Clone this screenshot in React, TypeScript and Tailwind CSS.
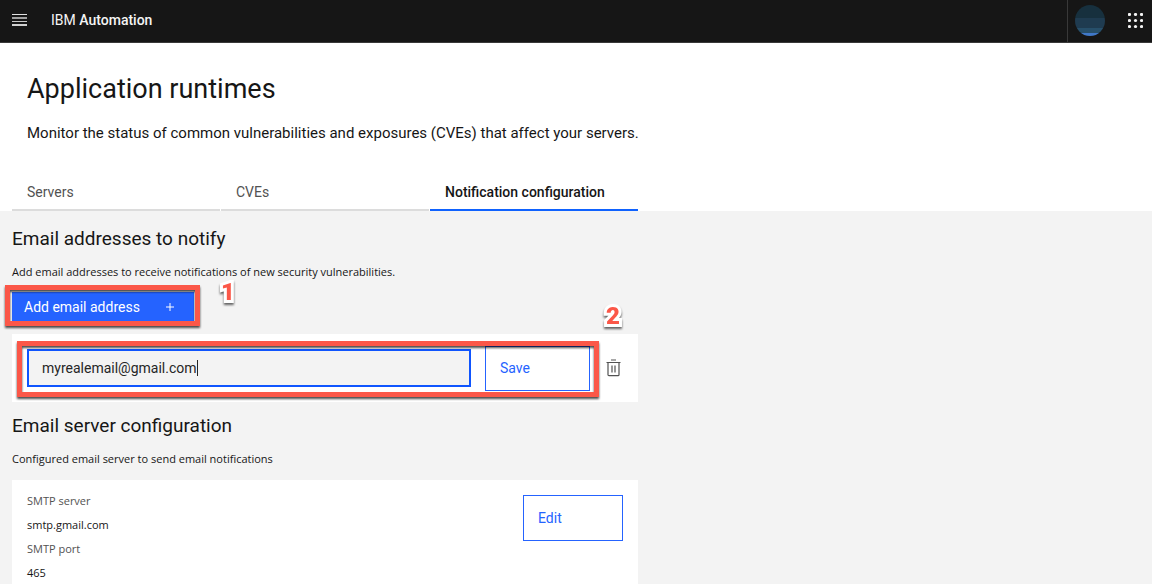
import React, { useState } from "react";

const tabs = ["Servers", "CVEs", "Notification configuration"];

const settings = [
  { label: "SMTP server", value: "smtp.gmail.com" },
  { label: "SMTP port", value: "465" },
];

function MenuIcon() {
  return (
    <svg width="16" height="14" viewBox="0 0 16 14" aria-hidden="true">
      <rect y="1" width="15" height="1" fill="#e0e0e0" />
      <rect y="4" width="15" height="2" fill="#a0a0a0" />
      <rect y="8" width="15" height="1" fill="#c8c8c8" />
      <rect y="11" width="15" height="2" fill="#d0d0d0" />
    </svg>
  );
}

function Avatar() {
  return (
    <svg width="30" height="31" viewBox="0 0 30 31" aria-hidden="true">
      <clipPath id="avatar">
        <ellipse cx="15" cy="15.5" rx="15" ry="15.5" />
      </clipPath>
      <g clipPath="url(#avatar)">
        <rect width="30" height="13" fill="#17303e" />
        <rect y="13" width="30" height="10" fill="#1f3b50" />
        <rect y="23" width="30" height="5" fill="#274f6a" />
        <rect y="28" width="30" height="3" fill="#4078c8" />
      </g>
    </svg>
  );
}

function AppsIcon() {
  return (
    <svg width="15" height="15" viewBox="0 0 15 15" fill="#f4f4f4" aria-hidden="true">
      {[0, 6, 12].map((y) =>
        [0, 6, 12].map((x) => <circle key={`${x}-${y}`} cx={x + 1.5} cy={y + 1.5} r="1.6" />)
      )}
    </svg>
  );
}

function TrashIcon() {
  return (
    <svg width="15" height="18" viewBox="0 0 15 18" fill="none" stroke="#525252" strokeWidth="1.2" aria-hidden="true">
      <path d="M5 1h5M0.5 3.5h14M2 3.5v12.2a1 1 0 0 0 1 1h9a1 1 0 0 0 1-1V3.5M6 6.5v7M9 6.5v7" />
    </svg>
  );
}

function Step({ n, className }: { n: number; className: string }) {
  return (
    <span
      className={`absolute text-2xl leading-6 font-black text-[#fb5748] [-webkit-text-stroke:6px_white] [paint-order:stroke_fill] drop-shadow-[0_2px_1px_rgba(0,0,0,0.6)] ${className}`}
    >
      {n}
    </span>
  );
}

const frame =
  "pointer-events-none absolute border-[5px] border-[#fb5748] drop-shadow-[0_2px_1px_rgba(0,0,0,0.7)]";

const small = "font-['Open_Sans',sans-serif] text-[11px]";

export default function App() {
  const [email, setEmail] = useState("myrealemail@gmail.com");
  const [active, setActive] = useState(2);

  return (
    <div className="flex h-screen flex-col overflow-hidden bg-[#f3f3f3] font-[Roboto,sans-serif] text-[#161616]">
      <header className="flex h-[43px] shrink-0 items-center border-b border-[#393939] bg-[#161616] pb-0.5 pl-3 text-[#f4f4f4]">
        <button aria-label="Open menu">
          <MenuIcon />
        </button>
        <a href="#" className="ml-[23px] text-sm font-medium">
          <span className="font-normal">IBM</span> Automation
        </a>
        <div className="-mb-0.5 ml-auto flex h-[42px] items-center border-l border-[#393939] pr-[9px] pb-0.5 pl-[7px]">
          <button aria-label="User profile">
            <Avatar />
          </button>
          <button aria-label="App switcher" className="ml-[23px]">
            <AppsIcon />
          </button>
        </div>
      </header>

      <div className="shrink-0 bg-white px-3">
        <div className="px-[15px] pt-7">
          <h1 className="text-[27px] leading-9">Application runtimes</h1>
          <p className="mt-[14px] text-[15px] leading-6">
            Monitor the status of common vulnerabilities and exposures (CVEs) that affect your servers.
          </p>
        </div>
        <div role="tablist" className="mt-[30px] flex max-w-[626px] gap-px">
          {tabs.map((tab, i) => (
            <button
              key={tab}
              role="tab"
              aria-selected={i === active}
              onClick={() => setActive(i)}
              className={`h-9 flex-1 border-b-2 pl-[15px] text-left text-sm whitespace-nowrap ${
                i === active ? "border-[#0f62fe] font-medium" : "border-[#dcdcdc] text-[#525252]"
              }`}
            >
              {tab}
            </button>
          ))}
        </div>
      </div>

      <main className="max-w-[650px] px-3 pt-4">
        <section>
          <h2 className="text-[19px] leading-6">Email addresses to notify</h2>
          <p className={`mt-[13px] leading-4 ${small}`}>
            Add email addresses to receive notifications of new security vulnerabilities.
          </p>
          <div className="relative mt-3">
            <button className="flex h-[30px] w-[182px] items-center justify-between bg-[#2563ff] pr-5 pl-3 text-sm text-white">
              Add email address
              <svg width="8" height="8" viewBox="0 0 8 8" stroke="white" aria-hidden="true">
                <path d="M4 0v8M0 4h8" />
              </svg>
            </button>
            <div className={`${frame} -top-[7px] -left-[7px] h-[41px] w-[195px]`} />
            <Step n={1} className="-top-3 left-[209px]" />
          </div>

          <form onSubmit={(e) => e.preventDefault()} className="relative mt-3 flex h-[68px] items-center bg-white pr-[17px] pl-[15px]">
            <div className="flex h-[38px] flex-1 items-center border-2 border-[#0f55fe] bg-[#f3f3f3] pl-[13px]">
              <input
                aria-label="Email address"
                type="text"
                value={email}
                onChange={(e) => setEmail(e.target.value)}
                className="field-sizing-content bg-transparent text-sm text-[#262626] outline-none"
              />
              <span className="h-4 w-px bg-[#262626]" />
            </div>
            <button className="ml-[14px] h-[45px] w-[105px] border border-[#2563ff] pl-[14px] text-left text-sm text-[#2563ff]">
              Save
            </button>
            <button type="button" aria-label="Delete" className="ml-4">
              <TrashIcon />
            </button>
            <div className={`${frame} top-[7px] right-[39px] left-[5px] h-[56px]`} />
            <Step n={2} className="-top-[30px] right-[18px]" />
          </form>
        </section>

        <section className="mt-3">
          <h2 className="text-[19px] leading-6">Email server configuration</h2>
          <p className={`mt-[13px] leading-4 ${small}`}>Configured email server to send email notifications</p>
          <div className="mt-[13px] flex items-start justify-between bg-white px-[15px] pt-[15px] pb-10">
            <dl className={`-mt-[6px] leading-6 ${small}`}>
              {settings.map((s) => (
                <div key={s.label}>
                  <dt className="text-[#525252]">{s.label}</dt>
                  <dd>{s.value}</dd>
                </div>
              ))}
            </dl>
            <button className="h-[46px] w-[100px] border border-[#2563ff] pl-[14px] text-left text-sm text-[#2563ff]">
              Edit
            </button>
          </div>
        </section>
      </main>
    </div>
  );
}
